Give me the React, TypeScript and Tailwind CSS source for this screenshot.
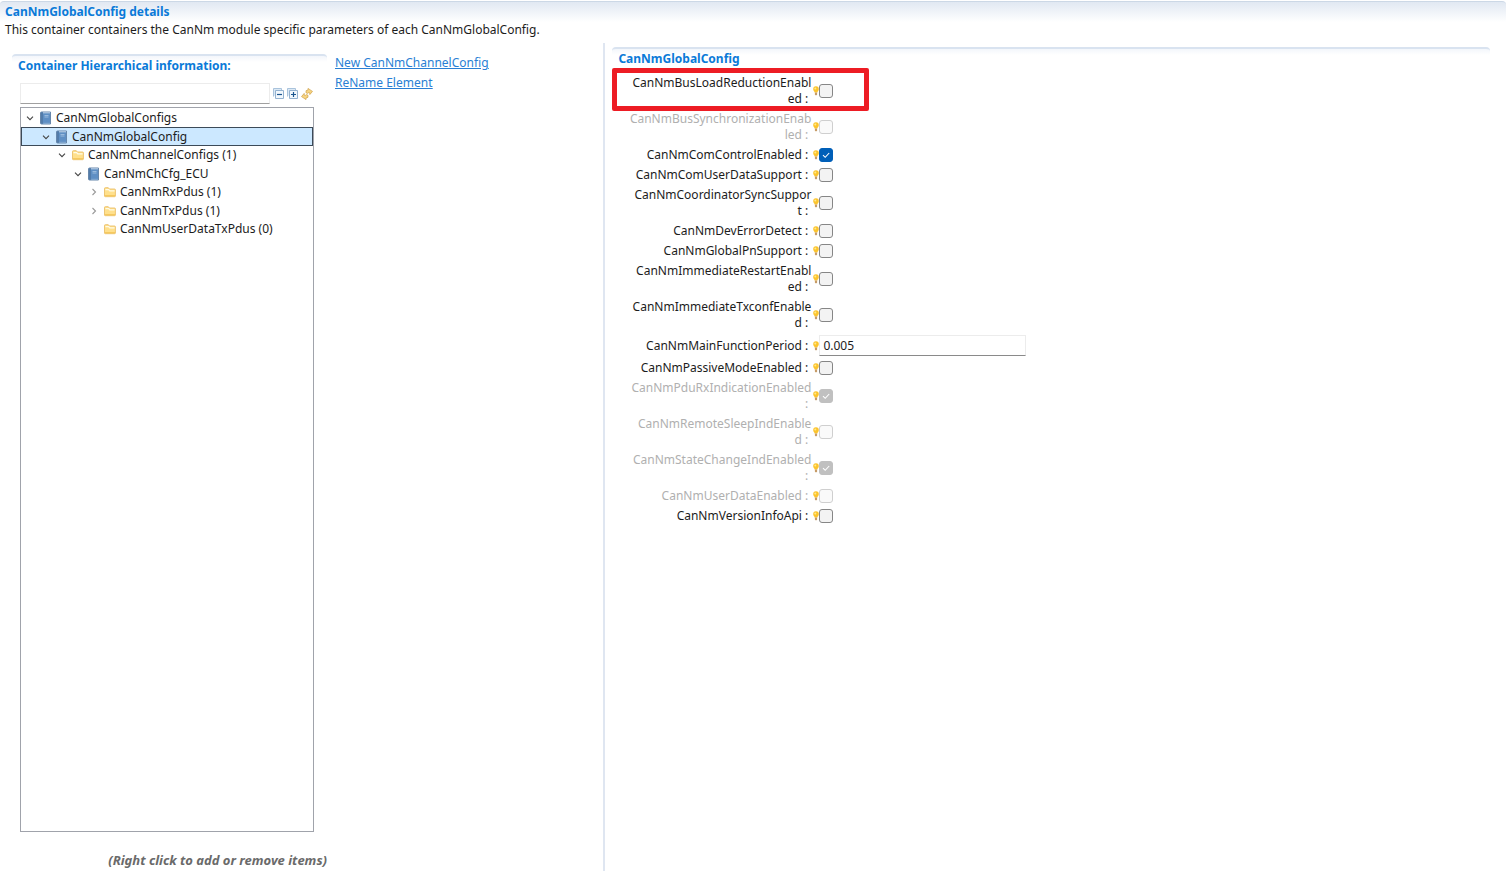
import { useState } from "react";

type NodeKind = "book" | "folder";

interface TreeNode {
  label: string;
  kind: NodeKind;
  indent: string;
  open?: boolean;
  leaf?: boolean;
}

const nodes: TreeNode[] = [
  { label: "CanNmGlobalConfigs", kind: "book", indent: "pl-[3px]", open: true },
  { label: "CanNmGlobalConfig", kind: "book", indent: "pl-[19px]", open: true },
  { label: "CanNmChannelConfigs (1)", kind: "folder", indent: "pl-[35px]", open: true },
  { label: "CanNmChCfg_ECU", kind: "book", indent: "pl-[51px]", open: true },
  { label: "CanNmRxPdus (1)", kind: "folder", indent: "pl-[67px]" },
  { label: "CanNmTxPdus (1)", kind: "folder", indent: "pl-[67px]" },
  { label: "CanNmUserDataTxPdus (0)", kind: "folder", indent: "pl-[67px]", leaf: true },
];

interface Field {
  id: string;
  label: string;
  checked?: boolean;
  disabled?: boolean;
  value?: string;
  marked?: boolean;
}

// "\n" marks where a long parameter name wraps
const fields: Field[] = [
  { id: "busLoad", label: "CanNmBusLoadReductionEnabl\ned :", marked: true },
  { id: "busSync", label: "CanNmBusSynchronizationEnab\nled :", disabled: true },
  { id: "comControl", label: "CanNmComControlEnabled :", checked: true },
  { id: "comUserData", label: "CanNmComUserDataSupport :" },
  { id: "coordSync", label: "CanNmCoordinatorSyncSuppor\nt :" },
  { id: "devError", label: "CanNmDevErrorDetect :" },
  { id: "globalPn", label: "CanNmGlobalPnSupport :" },
  { id: "restart", label: "CanNmImmediateRestartEnabl\ned :" },
  { id: "txconf", label: "CanNmImmediateTxconfEnable\nd :" },
  { id: "period", label: "CanNmMainFunctionPeriod :", value: "0.005" },
  { id: "passive", label: "CanNmPassiveModeEnabled :" },
  { id: "pduRx", label: "CanNmPduRxIndicationEnabled\n:", checked: true, disabled: true },
  { id: "remoteSleep", label: "CanNmRemoteSleepIndEnable\nd :", disabled: true },
  { id: "stateChange", label: "CanNmStateChangeIndEnabled\n:", checked: true, disabled: true },
  { id: "userData", label: "CanNmUserDataEnabled :", disabled: true },
  { id: "version", label: "CanNmVersionInfoApi :" },
];

const BookIcon = () => (
  <svg className="w-3 h-[14px] shrink-0" viewBox="0 0 12 14">
    <path d="M1.500 1h9v12h-9a1 1 0 0 1-1-1V2a1 1 0 0 1 1-1z" fill="#5f8fc4" stroke="#6787ab" strokeWidth="1" />
    <path d="M2 1.5v11" stroke="#4b7099" strokeWidth="1.2" />
    <path d="M3 1.8h7" stroke="#c3d5e8" strokeWidth="1" />
    <path d="M4.500 4.500h4M4.500 6h4" stroke="#a9c6e4" strokeWidth="0.8" />
    <path d="M3.200 12.300H10" stroke="#8fb2d8" strokeWidth="0.8" />
  </svg>
);

const FolderIcon = () => (
  <svg className="w-3 h-3 shrink-0" viewBox="0 0 12 12">
    <path d="M.5 10V2.5q0-.8.8-.8h3l1 1.3h5.2q.9 0 .9.8V10q0 .7-.8.7H1.3q-.8 0-.8-.7z" fill="#ffe08c" stroke="#ebc06a" strokeWidth="0.9" />
    <path d="M1.4 3.6h3.2l1.2 1.2h4.8" fill="none" stroke="#fffbe6" strokeWidth="1.3" />
    <path d="M1 9h10v1.3H1z" fill="#f6c95f" />
  </svg>
);

const Chevron = ({ open }: { open?: boolean }) => (
  <svg className="w-[10px] h-[10px]" viewBox="0 0 10 10" fill="none" strokeWidth="1.1">
    {open ? <path d="M2 3.7l3 3 3-3" stroke="#444" /> : <path d="M3.5 2l3 3-3 3" stroke="#999" />}
  </svg>
);

const BulbIcon = () => (
  <svg className="w-[6px] h-[10px] shrink-0" viewBox="0 0 6 10">
    <path d="M3 .3a2.8 2.8 0 0 1 2.8 2.9C5.8 4.700 4.600 5 4.400 6.500H1.600C1.400 5 .2 4.700.2 3.200A2.800 2.800 0 0 1 3 .3z" fill="#fcc42c" />
    <circle cx="2.3" cy="2.4" r="1" fill="#ffe98f" />
    <path d="M1.900 6.500h2.200v2.200q-1.100 1-2.200 0z" fill="#c79b66" />
  </svg>
);

const BoxIcon = ({ plus }: { plus?: boolean }) => (
  <svg className="w-[11px] h-[11px]" viewBox="0 0 11 11" fill="none">
    <path d="M.5 8.500v-8h8v1.500" fill="#dce9f5" stroke="#a9c3dc" />
    <path d="M2.500 2.500h8v8h-8z" fill="#f2f8fd" stroke="#94b2d0" />
    <path d={plus ? "M4 6.500h5M6.500 4v5" : "M4 6.500h5"} stroke="#1c568f" strokeWidth="1.2" />
  </svg>
);

const SyncIcon = () => (
  <svg className="w-3 h-3" viewBox="0 0 12 12" fill="#f7d481" stroke="#cfa04a" strokeWidth="0.7" strokeLinejoin="round">
    <path d="M5 4.800Q4.200 2 7 1.900V.400l4.500 3L8.800 6.600V4.800Q7 4.400 6.600 5.400z" />
    <path d="M7 7.200Q7.800 10 5 10.100v1.500L.5 8.600l2.700-3.200v1.800Q5 7.600 5.400 6.600z" />
  </svg>
);

const Section = ({ title, children, className = "" }: { title: string; children: React.ReactNode; className?: string }) => (
  <section className={`flex flex-col ${className}`}>
    <div className="rounded-t border-t-2 border-[#d9e3f0] bg-linear-to-b from-[#f3f6fb] to-white to-30% pl-[6px]">
      <h2 className="text-xs leading-5 font-bold text-[#0a7ad8]">{title}</h2>
    </div>
    {children}
  </section>
);

const FieldRow = ({ field }: { field: Field }) => {
  const [checked, setChecked] = useState(!!field.checked);
  const [value, setValue] = useState(field.value ?? "");

  return (
    <div className="relative flex items-center">
      <label
        htmlFor={field.id}
        className={`w-[199px] shrink-0 whitespace-pre text-right leading-4 ${field.disabled ? "text-[#b0b0b0]" : "text-[#1c1c1c]"}`}
      >
        {field.label + "\u00a0"}
      </label>
      <span className="ml-[2px] flex items-center">
        <BulbIcon />
      </span>
      {field.value !== undefined ? (
        <input
          id={field.id}
          type="text"
          value={value}
          onChange={(e) => setValue(e.target.value)}
          className="h-[21px] w-[207px] border border-[#ececec] border-b-[#8a8a8a] bg-white px-[3px] text-[#1c1c1c] outline-none"
        />
      ) : (
        <span className="relative flex h-[14px] w-[14px] shrink-0">
          <input
            id={field.id}
            type="checkbox"
            checked={checked}
            disabled={field.disabled}
            onChange={(e) => setChecked(e.target.checked)}
            className="h-[14px] w-[14px] appearance-none rounded-[3px] border border-[#868686] bg-[#f3f3f3] checked:border-[#005fb8] checked:bg-[#005fb8] disabled:border-[#cfcfcf] disabled:bg-[#fafafa] disabled:checked:border-[#c0c0c0] disabled:checked:bg-[#c0c0c0]"
          />
          {checked && (
            <svg className="pointer-events-none absolute inset-0" viewBox="0 0 14 14" fill="none" stroke="#fff" strokeWidth="1.1">
              <path d="M4 7.200l2.200 2.100L10.200 5" />
            </svg>
          )}
        </span>
      )}
      {/* Highlight frame */}
      {field.marked && (
        <div className="pointer-events-none absolute -top-[7px] left-0 h-[43px] w-[257px] rounded-[2px] border-[5px] border-[#ed1c24]" />
      )}
    </div>
  );
};

export default function App() {
  const [selected, setSelected] = useState(1);
  const [filter, setFilter] = useState("");

  return (
    <div className="flex min-h-screen flex-col bg-white pb-[3px] font-['Noto_Sans','Open_Sans',sans-serif] text-xs text-[#1c1c1c]">
      {/* Form header */}
      <header className="mt-px">
        <div className="rounded-t border-t border-[#ccd8e6] bg-linear-to-b from-[#e1e8f2] to-white pl-[5px]">
          <h1 className="text-xs leading-5 font-bold text-[#0a7ad8]">CanNmGlobalConfig details</h1>
        </div>
        <p className="pl-[5px] leading-4">
          This container containers the CanNm module specific parameters of each CanNmGlobalConfig.
        </p>
      </header>

      <main className="mt-[5px] grid flex-1 grid-cols-[2fr_3fr]">
        <div className="flex pt-[11px] pl-3">
          {/* Hierarchy */}
          <Section title="Container Hierarchical information:" className="w-[315px] shrink-0">
            <div className="mt-[7px] flex items-center gap-[3px] pl-2">
              <input
                type="text"
                aria-label="Filter"
                value={filter}
                onChange={(e) => setFilter(e.target.value)}
                className="h-[21px] w-[250px] border border-[#ececec] border-b-[#a0a0a0] bg-white px-1 outline-none"
              />
              <button type="button" aria-label="Collapse all">
                <BoxIcon />
              </button>
              <button type="button" aria-label="Expand all">
                <BoxIcon plus />
              </button>
              <button type="button" aria-label="Refresh">
                <SyncIcon />
              </button>
            </div>
            <ul role="tree" className="mt-[3px] mr-[13px] ml-2 flex-1 border border-[#a0a3ab] pt-px">
              {nodes.map((node, i) => (
                <li
                  key={node.label}
                  role="treeitem"
                  aria-selected={i === selected}
                  onClick={() => setSelected(i)}
                  className={`flex h-[18px] items-center even:h-[19px] ${node.indent} ${i === selected ? "bg-[#cce8ff] outline -outline-offset-1 outline-[#3c4a58]" : ""}`}
                >
                  <span className="mr-[5px] ml-px h-[10px] w-[10px] shrink-0">{!node.leaf && <Chevron open={node.open} />}</span>
                  {node.kind === "book" ? <BookIcon /> : <FolderIcon />}
                  <span className="ml-1 leading-4 whitespace-nowrap">{node.label}</span>
                </li>
              ))}
            </ul>
            <p className="mt-[19px] mb-[2px] text-right text-[13px] leading-[18px] font-bold text-[#6a6a6a] italic">
              (Right click to add or remove items)
            </p>
          </Section>

          {/* Actions */}
          <nav className="ml-2 flex flex-col items-start gap-1 pt-px leading-4 text-[#2a7fd4] underline">
            <a href="#new">New CanNmChannelConfig</a>
            <a href="#rename">ReName Element</a>
          </nav>
        </div>

        {/* Parameters */}
        <div className="ml-px border-l-2 border-[#dfe6f1] pt-1 pr-4 pl-[7px]">
          <Section title="CanNmGlobalConfig">
            <div className="mt-[6px] flex flex-col gap-1">
              {fields.map((field) => (
                <FieldRow key={field.id} field={field} />
              ))}
            </div>
          </Section>
        </div>
      </main>
    </div>
  );
}
